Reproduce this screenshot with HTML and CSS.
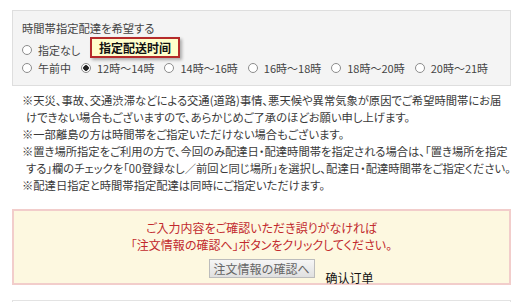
FILE: index.html
```html
<!DOCTYPE html>
<html lang="ja">
<head>
  <meta charset="UTF-8">
  <title>時間帯指定配達</title>
  <link rel="stylesheet" href="styles.css">
</head>
<body>

  <div class="wrap">
    <div class="time-box">
      <div class="time-title">時間帯指定配達を希望する</div>
      <div class="time-row">
        <label class="opt"><input type="radio" name="time">指定なし</label>
      </div>
      <div class="time-row">
        <label class="opt"><input type="radio" name="time">午前中</label>
        <label class="opt"><input type="radio" name="time" checked>12時〜14時</label>
        <label class="opt"><input type="radio" name="time">14時〜16時</label>
        <label class="opt"><input type="radio" name="time">16時〜18時</label>
        <label class="opt"><input type="radio" name="time">18時〜20時</label>
        <label class="opt"><input type="radio" name="time">20時〜21時</label>
      </div>
      <div class="tip">指定配送时间</div>
    </div>

    <div class="notes">
      <p>※天災、事故、交通渋滞などによる交通(道路)事情、悪天候や異常気象が原因でご希望時間帯にお届<br>けできない場合もございますので、あらかじめご了承のほどお願い申し上げます。</p>
      <p>※一部離島の方は時間帯をご指定いただけない場合もございます。</p>
      <p>※置き場所指定をご利用の方で、今回のみ配達日・配達時間帯を指定される場合は、「置き場所を指定<br>する」欄のチェックを「00登録なし／前回と同じ場所」を選択し、配達日・配達時間帯をご指定ください。</p>
      <p>※配達日指定と時間帯指定配達は同時にご指定いただけます。</p>
    </div>

    <div class="confirm-box">
      <p class="confirm-msg">ご入力内容をご確認いただき誤りがなければ<br>「注文情報の確認へ」ボタンをクリックしてください。</p>
      <div class="confirm-row">
        <button class="btn-confirm">注文情報の確認へ</button>
        <span class="confirm-note">确认订单</span>
      </div>
    </div>

    <div class="next-box"></div>
  </div>

</body>
</html>
```

FILE: styles.css
```css
body {
  margin: 0;
  padding: 0;
  background: #fff;
  color: #333;
  font-family: "Noto Sans CJK JP", "Noto Sans", sans-serif;
  font-size: 11.3px;
  font-feature-settings: "palt";
}

.wrap {
  padding: 10px 21px 0 12px;
}

.time-box {
  position: relative;
  background: #f4f4f4;
  border: 1px solid #dedede;
  padding: 8px 9px 8px 9px;
}

.time-title {
  line-height: 18px;
  color: #444;
}

.time-row {
  display: flex;
  align-items: center;
  height: 18px;
  white-space: nowrap;
  font-size: 11px;
  color: #444;
}

.time-title + .time-row {
  margin-top: 4px;
}

.opt {
  display: flex;
  align-items: center;
  gap: 6px;
  margin-right: 10px;
}

.opt input {
  appearance: none;
  -webkit-appearance: none;
  margin: 0;
  width: 10px;
  height: 10px;
  border: 1px solid #8c8c8c;
  border-radius: 50%;
  background: #fff;
}

.opt input:checked {
  background: radial-gradient(circle, #222 0 2.5px, #fff 3px);
}

.tip {
  position: absolute;
  left: 77px;
  top: 26px;
  width: 86px;
  height: 17px;
  line-height: 17px;
  border: 2px solid #b52b2b;
  background: #ffffcc;
  box-shadow: 2px 2px 3px rgba(0, 0, 0, 0.3);
  color: #111;
  font-family: "Noto Sans CJK SC", sans-serif;
  font-weight: bold;
  font-size: 12px;
  text-align: center;
}

.notes {
  margin-top: 6px;
  padding-left: 10px;
  color: #3a3a3a;
}

.notes p {
  margin: 0;
  line-height: 17px;
  padding-left: 4px;
  text-indent: -4px;
  white-space: nowrap;
}

.confirm-box {
  margin-top: 15px;
  background: #fdf8e0;
  border: 2px solid #f2cdcb;
  padding: 8px 0 5px;
}

.confirm-msg {
  margin: 0;
  text-align: center;
  color: #c22a2e;
  font-size: 12px;
  line-height: 17px;
}

.confirm-row {
  display: grid;
  grid-template-columns: 1fr auto 1fr;
  margin-top: 6px;
}

.btn-confirm {
  grid-column: 2;
  height: 19px;
  width: 106px;
  padding: 0;
  border: 1px solid #bcbcbc;
  background: linear-gradient(#f6f6f6, #e0e0e0);
  color: #666;
  font-family: "Noto Sans CJK JP", sans-serif;
  font-size: 12px;
  line-height: 17px;
}

.confirm-note {
  grid-column: 3;
  align-self: end;
  margin: 0 0 -7px 11px;
  line-height: 14px;
  color: #111;
  font-family: "Noto Sans CJK SC", sans-serif;
  font-size: 12px;
}

.next-box {
  margin-top: 15px;
  height: 40px;
  border: 1px solid #e3e3e3;
}
```
